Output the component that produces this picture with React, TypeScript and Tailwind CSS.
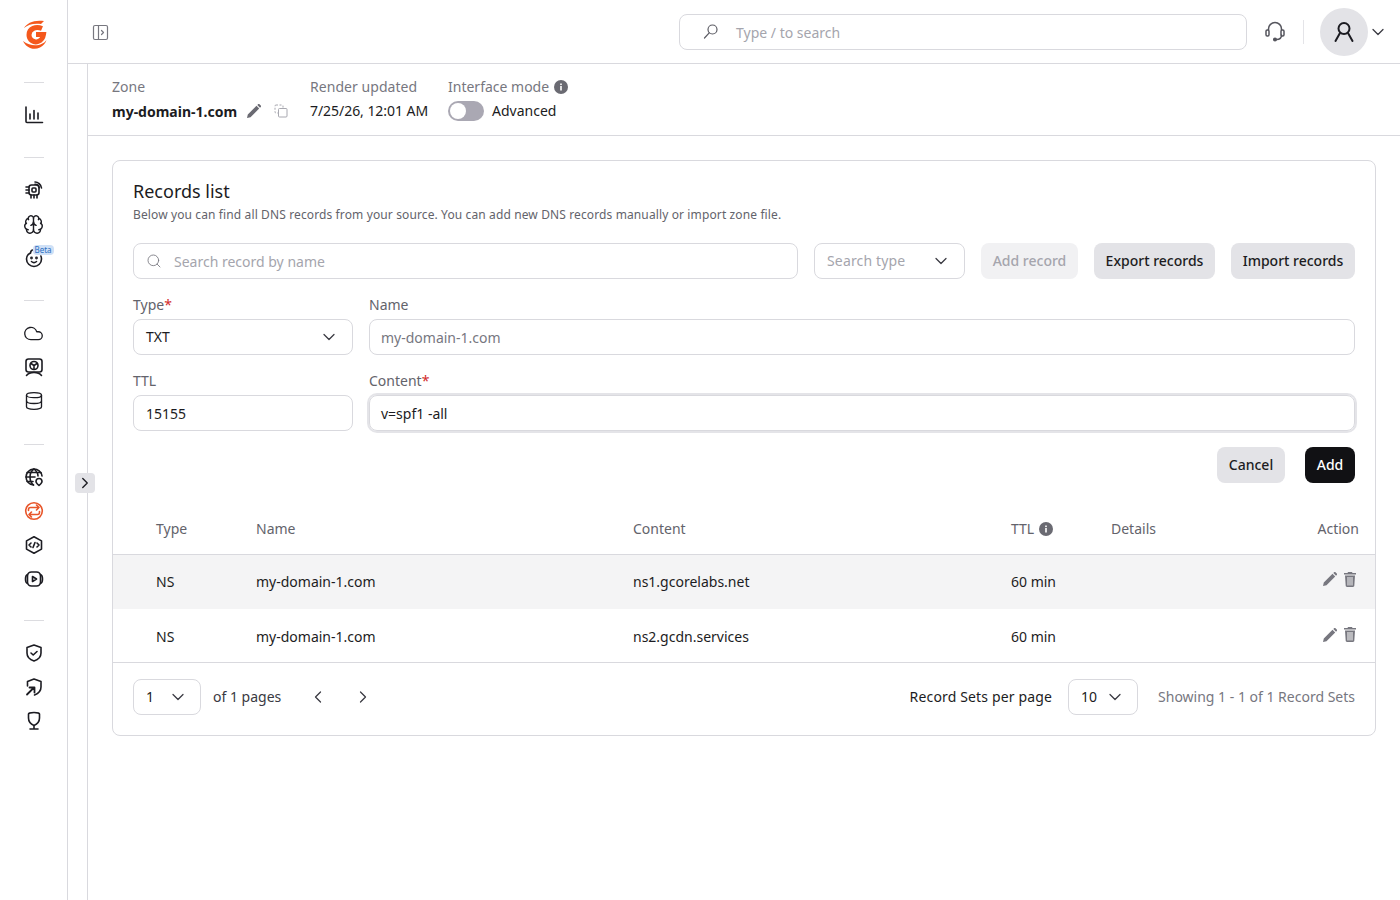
import { ChevronDown, ChevronLeft, ChevronRight, Search, Cloud, Database, Brain } from "lucide-react"

function Logo() {
  return (
    <svg width="26" height="30" viewBox="0 0 26 30" fill="none">
      <path d="M3 8C6 3 13-.5 23 1L20 4C13 3 7 4.500 3 8z" fill="#f4581c" />
      <path d="M21 8.500C15 6 8 8.500 8 15C8 20 13 23 17 21.500C20 20.500 22 18 22.500 14.500H15" stroke="#f4581c" strokeWidth="5" />
      <path d="M2 21C4.500 27 12 31 19 27.500C22.500 25.800 24.500 23 25.500 20C22 25.500 11 28 2 21z" fill="#f4581c" />
    </svg>
  )
}

function NavIcon({ children, color = "#1c1c22" }: { children: React.ReactNode; color?: string }) {
  return (
    <svg width="20" height="20" viewBox="0 0 20 20" fill="none" stroke={color} strokeWidth="1.6" strokeLinecap="round" strokeLinejoin="round">
      {children}
    </svg>
  )
}

function NavItem({ children, badge }: { children: React.ReactNode; badge?: boolean }) {
  return (
    <div className="relative w-[34px] h-[34px] flex items-center justify-center">
      {children}
      {badge && (
        <span className="absolute left-[16px] top-[4px] h-[10px] px-[2px] rounded-[4px] bg-[#cfe0f6] text-[#2a6fc0] text-[8px] leading-[10px]">Beta</span>
      )}
    </div>
  )
}

function Divider() {
  return <div className="w-5 h-px bg-[#dcdce0]" />
}

function InfoDot() {
  return (
    <svg width="14" height="14" viewBox="0 0 14 14" className="ml-[5px]">
      <circle cx="7" cy="7" r="7" fill="#6a6a72" />
      <rect x="6.200" y="6" width="1.600" height="4.500" fill="#fff" />
      <rect x="6.200" y="3.500" width="1.600" height="1.600" fill="#fff" />
    </svg>
  )
}

function Sidebar() {
  return (
    <aside className="w-[68px] shrink-0 border-r border-[#d9d9de] flex flex-col items-center">
      <div className="h-[70px] flex items-center justify-center"><Logo /></div>
      <div className="mt-[12px]"><Divider /></div>
      <div className="mt-[15px]">
        <NavItem>
          <NavIcon><path d="M2 2v14.500c0 .6.4 1 1 1h15.500M6 14V9M10 14V5.500M14 14v-6" /></NavIcon>
        </NavItem>
      </div>
      <div className="mt-[25px]"><Divider /></div>
      <div className="mt-[15px] flex flex-col">
        <NavItem>
          <NavIcon>
            <rect x="5" y="5" width="10" height="10" rx="2.500" />
            <rect x="8" y="8" width="4" height="4" rx="1" />
            <path d="M2 7h3M2 10h3M2 13h3M7 15v3M10 15v3M13 15v3M11 2c3 0 6 2.500 6.500 6M11 4.200c2 0 3.800 1.500 4.200 3.600" />
          </NavIcon>
        </NavItem>
        <NavItem><Brain size={21} strokeWidth={1.600} color="#1c1c22" /></NavItem>
        <NavItem badge>
          <NavIcon>
            <path d="M6.500 5c-2.500 1.200-4 3.300-4 6a7.500 7.500 0 0 0 15 0c0-1-.2-2-.6-3" />
            <path d="M6.500 5c0-1.300.6-2.300 1.800-3" />
            <circle cx="7.500" cy="10" r=".6" />
            <circle cx="12.500" cy="10" r=".6" />
            <path d="M7.500 13.500c1.500 1.300 3.500 1.300 5 0" />
          </NavIcon>
        </NavItem>
      </div>
      <div className="mt-[25px]"><Divider /></div>
      <div className="mt-[15px] flex flex-col">
        <NavItem><Cloud size={21} strokeWidth={1.500} color="#1c1c22" /></NavItem>
        <NavItem>
          <NavIcon>
            <rect x="2" y="2" width="16" height="13" rx="2.500" />
            <circle cx="10" cy="8.500" r="4" />
            <path d="M10 8.500V12M10 8.500l-3-2M10 8.500l3-2M2.500 18.500c2-2.500 4-3 7.500-3s5.500.5 7.500 3" />
          </NavIcon>
        </NavItem>
        <NavItem><Database size={20} strokeWidth={1.600} color="#1c1c22" /></NavItem>
      </div>
      <div className="mt-[26px]"><Divider /></div>
      <div className="mt-[15px] flex flex-col">
        <NavItem>
          <NavIcon>
            <path d="M18 9a8 8 0 1 0-8.500 9" />
            <path d="M2 10h9M3 5.500h14M3 14.500h6M10 2c-3 2-4 5-4 8s1 6 3.500 8M10 2c2.500 2 4 4.500 4 7" />
            <path d="M15 18.500c-2-1.700-3-2.800-3-4a3 3 0 0 1 6 0c0 1.200-1 2.300-3 4z" />
          </NavIcon>
        </NavItem>
        <NavItem>
          <NavIcon color="#e8562a">
            <circle cx="10" cy="10" r="8.300" />
            <path d="M4.500 9.500V8.500c0-1.200.8-2 2-2H15M12.500 4L15 6.500L12.500 9" />
            <path d="M15.500 10.500v1c0 1.200-.8 2-2 2H5M7.500 11L5 13.500L7.500 16" />
          </NavIcon>
        </NavItem>
        <NavItem>
          <NavIcon>
            <path d="M10 1.700l7.500 4.200v8.200L10 18.300l-7.500-4.200V5.900z" />
            <path d="M7 8l-2 2 2 2M13 8l2 2-2 2M11 7.500l-2 5" />
          </NavIcon>
        </NavItem>
        <NavItem>
          <NavIcon>
            <rect x="3.500" y="3" width="13" height="14" rx="4" />
            <path d="M3.500 5.500C2 6 1.500 7.500 1.500 10s.5 4 2 4.500M16.500 5.500c1.500.5 2 2 2 4.500s-.5 4-2 4.500" />
            <path d="M8.500 7.500l4 2.500-4 2.500z" />
          </NavIcon>
        </NavItem>
      </div>
      <div className="mt-[24px]"><Divider /></div>
      <div className="mt-[15px] flex flex-col">
        <NavItem>
          <NavIcon>
            <path d="M10 2l7 2.500V10c0 4-3 6.700-7 8-4-1.300-7-4-7-8V4.500z" />
            <path d="M7 10l2.200 2L13 8.500" />
          </NavIcon>
        </NavItem>
        <NavItem>
          <NavIcon>
            <path d="M3.500 9V4.500L10 2l7 2.500V10c0 4-3 6.700-6.500 8" />
            <path d="M3 17.500l7-7M5.500 10.500h5v5" strokeWidth="1.800" />
          </NavIcon>
        </NavItem>
        <NavItem>
          <NavIcon>
            <path d="M10 1.500c3 0 5.500.8 5.500 1.500v4c0 3.500-2 6-5.500 7.500C6.500 13 4.500 10.500 4.500 7V3c0-.7 2.500-1.500 5.500-1.500zM10 14.500V18M6 18h8" />
          </NavIcon>
        </NavItem>
      </div>
    </aside>
  )
}

function TopBar() {
  return (
    <header className="h-[64px] shrink-0 border-b border-[#d9d9de] flex items-center">
      <div className="ml-[24px] mt-[1px]">
        <svg width="17" height="17" viewBox="0 0 17 17" fill="none" stroke="#77777f" strokeWidth="1.200" strokeLinecap="round" strokeLinejoin="round">
          <rect x="1.500" y="1.500" width="14" height="14" rx="1.500" />
          <path d="M6.500 1.500v14M9.500 6.500l2 2-2 2" />
        </svg>
      </div>
      <div className="ml-[570px] w-[568px] h-[36px] border border-[#d9d9de] rounded-lg flex items-center pl-[22px]">
        <svg width="18" height="18" viewBox="0 0 18 18" fill="none" stroke="#5b5b63" strokeWidth="1.200" strokeLinecap="round">
          <circle cx="10.500" cy="6.500" r="4.500" />
          <path d="M7.200 9.800L2.500 15" />
        </svg>
        <span className="ml-[16px] mt-[1px] text-[14px] text-[#a5a5ad]">Type / to search</span>
      </div>
      <div className="ml-[17px]">
        <svg width="22" height="22" viewBox="0 0 22 22" fill="none" stroke="#55555d" strokeWidth="1.500" strokeLinecap="round">
          <path d="M4.500 9V8a6.500 6.500 0 0 1 13 0v1M17.500 14c0 2.500-1.800 4.500-5 4.500" />
          <rect x="2" y="9" width="3" height="6" rx="1.200" />
          <rect x="17" y="9" width="3" height="6" rx="1.200" />
          <circle cx="11" cy="18.500" r="1.300" fill="#55555d" />
        </svg>
      </div>
      <div className="ml-[17px] w-px h-[24px] bg-[#e4e4e8]" />
      <div className="ml-[16px] w-[48px] h-[48px] rounded-full bg-[#e3e3e7] flex items-center justify-center">
        <svg width="24" height="24" viewBox="0 0 24 24" fill="none" stroke="#1c1c22" strokeWidth="2" strokeLinecap="round">
          <circle cx="12" cy="8.500" r="5.500" />
          <path d="M8 13L3.500 21M16 13l4.500 8" />
        </svg>
      </div>
      <ChevronDown size={20} strokeWidth={1.500} color="#3a3a42" />
    </header>
  )
}

function ZoneBar() {
  return (
    <div className="h-[72px] shrink-0 border-b border-[#d9d9de] pl-[24px] pt-[12px] flex text-[14px]">
      <div className="w-[198px]">
        <div className="h-[22px] leading-[22px] text-[#77777f]">Zone</div>
        <div className="h-[26px] flex items-center text-[#1c1c22]">
          <span className="font-bold">my-domain-1.com</span>
          <svg width="14" height="14" viewBox="0 0 14 14" fill="#6a6a72" className="ml-[10px]">
            <path d="M0 14l.8-3.500L9.500 1.800l2.700 2.700-8.700 8.700zM10.300 1l1-1c.3-.2.600-.2.900 0l1.800 1.800c.2.300.2.600 0 .9l-1 1z" />
          </svg>
          <svg width="14" height="14" viewBox="0 0 14 14" fill="none" stroke="#a8a8b0" strokeWidth="1" strokeDasharray="2 1.500" className="ml-[13px]">
            <rect x="1" y="1" width="8" height="8" rx="1" />
            <rect x="4.500" y="4.500" width="8.500" height="8.500" rx="1" strokeDasharray="none" fill="#fff" />
          </svg>
        </div>
      </div>
      <div className="w-[138px]">
        <div className="h-[22px] leading-[22px] text-[#77777f] tracking-[0.05px]">Render updated</div>
        <div className="h-[26px] leading-[26px] text-[#1c1c22] tracking-[-0.05px]">7/25/26, 12:01 AM</div>
      </div>
      <div>
        <div className="h-[21px] flex items-center text-[#77777f]">
          Interface mode
          <InfoDot />
        </div>
        <div className="h-[28px] flex items-center text-[#1c1c22]">
          <div className="w-[36px] h-[20px] rounded-full bg-[#aaa8b3] p-[2px]">
            <div className="w-[16px] h-[16px] rounded-full bg-white" />
          </div>
          <span className="ml-[8px] -mt-[1px]">Advanced</span>
        </div>
      </div>
    </div>
  )
}

function Field({ value, muted, className = "" }: { value: string; muted?: boolean; className?: string }) {
  return (
    <div className={`h-[36px] border border-[#d9d9de] rounded-lg flex items-center text-[14px] ${muted ? "text-[#77777f]" : "text-[#1c1c22]"} ${className}`}>
      {value}
    </div>
  )
}

const rows = [
  { type: "NS", name: "my-domain-1.com", content: "ns1.gcorelabs.net", ttl: "60 min", cls: "h-[54px] pb-[2px] bg-[#f4f4f5]" },
  { type: "NS", name: "my-domain-1.com", content: "ns2.gcdn.services", ttl: "60 min", cls: "h-[53px] pt-[2px]" },
]

function TrashIcon() {
  return (
    <svg width="12" height="15" viewBox="0 0 12 15" fill="#77777f">
      <path d="M4 0h4l.5 1H12v1.500H0V1h3.500zM1 3.500h10l-.7 10.300c0 .7-.6 1.200-1.300 1.200H3c-.7 0-1.300-.5-1.300-1.200zM3.500 5v8.500h1V5zM5.500 5v8.500h1V5zM7.500 5v8.500h1V5z" fillRule="evenodd" />
    </svg>
  )
}

function PencilIcon() {
  return (
    <svg width="14" height="14" viewBox="0 0 14 14" fill="#77777f">
      <path d="M0 14l.8-3.500L9.500 1.800l2.700 2.700-8.700 8.700zM10.300 1l1-1c.3-.2.600-.2.900 0l1.800 1.800c.2.300.2.600 0 .9l-1 1z" />
    </svg>
  )
}

function RecordsCard() {
  return (
    <section className="border border-[#d9d9de] rounded-lg h-[576px] flex flex-col">
      <div className="px-[20px] pt-[18px]">
        <h2 className="text-[18px] leading-[25px] text-[#1c1c22]">Records list</h2>
        <p className="text-[12px] leading-[18px] mt-[2px] text-[#63636b] tracking-[0.12px]">
          Below you can find all DNS records from your source. You can add new DNS records manually or import zone file.
        </p>
        <div className="mt-[19px] flex items-center text-[14px]">
          <div className="w-[665px] h-[36px] border border-[#d9d9de] rounded-lg flex items-center pl-[12px]">
            <Search size={16} strokeWidth={1.300} color="#77777f" />
            <span className="ml-[12px] text-[#a5a5ad]">Search record by name</span>
          </div>
          <div className="ml-[16px] w-[151px] h-[36px] border border-[#d9d9de] rounded-lg flex items-center justify-between pl-3 pr-[13px] text-[#a5a5ad]">
            <span className="-mt-[2px] tracking-[0.15px]">Search type</span>
            <ChevronDown size={20} strokeWidth={1.500} color="#3a3a42" />
          </div>
          <div className="ml-[16px] w-[97px] h-[36px] pb-[2px] rounded-lg bg-[#f1f1f3] flex items-center justify-center text-[#a5a5ad] font-medium">Add record</div>
          <div className="ml-[16px] w-[121px] h-[36px] pb-[2px] rounded-lg bg-[#e3e3e7] flex items-center justify-center text-[#1c1c22] font-medium">Export records</div>
          <div className="ml-[16px] w-[124px] h-[36px] pb-[2px] rounded-lg bg-[#e3e3e7] flex items-center justify-center text-[#1c1c22] font-medium">Import records</div>
        </div>
        <div className="mt-[20px] grid grid-cols-[220px_1fr] gap-x-4 gap-y-[20px] text-[14px]">
          <div>
            <div className="h-[12px] leading-[12px] mb-[8px] text-[#63636b]">Type<span className="text-[#d22c2c]">*</span></div>
            <div className="h-[36px] border border-[#d9d9de] rounded-lg pl-3 pr-[6px] flex items-center justify-between text-[#1c1c22]">
              <span className="-mt-[2px]">TXT</span>
              <ChevronDown size={20} strokeWidth={1.500} color="#3a3a42" className="mr-[7px]" />
            </div>
          </div>
          <div>
            <div className="h-[12px] leading-[12px] mb-[8px] text-[#63636b]">Name</div>
            <Field value="my-domain-1.com" muted className="px-[11px]" />
          </div>
          <div>
            <div className="h-[12px] leading-[12px] mb-[8px] text-[#63636b]">TTL</div>
            <Field value="15155" className="px-3" />
          </div>
          <div>
            <div className="h-[12px] leading-[12px] mb-[8px] text-[#63636b]">Content<span className="text-[#d22c2c]">*</span></div>
            <Field value="v=spf1 -all" className="px-[11px] shadow-[0_0_0_2px_#e4e4e8] border-[#c8c8ce]" />
          </div>
        </div>
        <div className="mt-[16px] flex justify-end gap-[20px] text-[14px] font-medium">
          <div className="w-[68px] h-[36px] pb-[2px] rounded-lg bg-[#e3e3e7] flex items-center justify-center text-[#1c1c22]">Cancel</div>
          <div className="w-[50px] h-[36px] pb-[2px] rounded-lg bg-[#111114] flex items-center justify-center text-white">Add</div>
        </div>
      </div>
      <div className="mt-[20px] h-[52px] border-b border-[#d9d9de] grid grid-cols-[100px_377px_378px_100px_1fr_auto] pl-[43px] pr-[16px] items-center text-[14px] text-[#63636b]">
        <span>Type</span>
        <span>Name</span>
        <span>Content</span>
        <span className="flex items-center">TTL<InfoDot /></span>
        <span>Details</span>
        <span>Action</span>
      </div>
      {rows.map((r) => (
        <div key={r.content} className={`${r.cls} grid grid-cols-[100px_377px_378px_100px_1fr_auto] pl-[43px] pr-[19px] items-center text-[14px] text-[#1c1c22]`}>
          <span>{r.type}</span>
          <span>{r.name}</span>
          <span>{r.content}</span>
          <span>{r.ttl}</span>
          <span />
          <span className="flex items-center gap-[7px] -mt-[4px]"><PencilIcon /><TrashIcon /></span>
        </div>
      ))}
      <div className="h-[73px] border-t border-[#d9d9de] px-[20px] pt-[16px] pb-[20px] flex items-center text-[14px] text-[#3a3a42]">
        <div className="w-[68px] h-[36px] border border-[#d9d9de] rounded-lg flex items-center justify-between pl-3 pr-[12px] text-[#1c1c22]">
          <span className="-mt-[2px]">1</span>
          <ChevronDown size={20} strokeWidth={1.500} color="#3a3a42" />
        </div>
        <span className="ml-[12px] -mt-[2px]">of 1 pages</span>
        <ChevronLeft size={20} strokeWidth={1.500} color="#3a3a42" className="ml-[27px]" />
        <ChevronRight size={20} strokeWidth={1.500} color="#3a3a42" className="ml-[25px]" />
        <span className="ml-auto -mt-[2px] tracking-[0.15px] text-[#1c1c22]">Record Sets per page</span>
        <div className="ml-[16px] w-[70px] h-[36px] border border-[#d9d9de] rounded-lg flex items-center justify-between pl-3 pr-[12px] text-[#1c1c22]">
          <span className="-mt-[2px]">10</span>
          <ChevronDown size={20} strokeWidth={1.500} color="#3a3a42" />
        </div>
        <span className="ml-[20px] -mt-[2px] text-[#77777f]">Showing 1 - 1 of 1 Record Sets</span>
      </div>
    </section>
  )
}

export default function App() {
  return (
    <div className="relative w-[1400px] h-[900px] overflow-hidden bg-white flex font-['Noto_Sans','Open_Sans',sans-serif]">
      <Sidebar />
      <div className="flex-1 flex flex-col min-w-0">
        <TopBar />
        <div className="flex-1 ml-[19px] border-l border-[#d9d9de] flex flex-col">
          <ZoneBar />
          <main className="pl-[24px] pr-[24px] pt-[24px]">
            <RecordsCard />
          </main>
        </div>
      </div>
      <button className="absolute left-[75px] top-[473px] w-[20px] h-[20px] rounded-[4px] bg-[#e3e3e7] flex items-center justify-center">
        <ChevronRight size={18} strokeWidth={1.800} color="#1c1c22" />
      </button>
    </div>
  )
}
